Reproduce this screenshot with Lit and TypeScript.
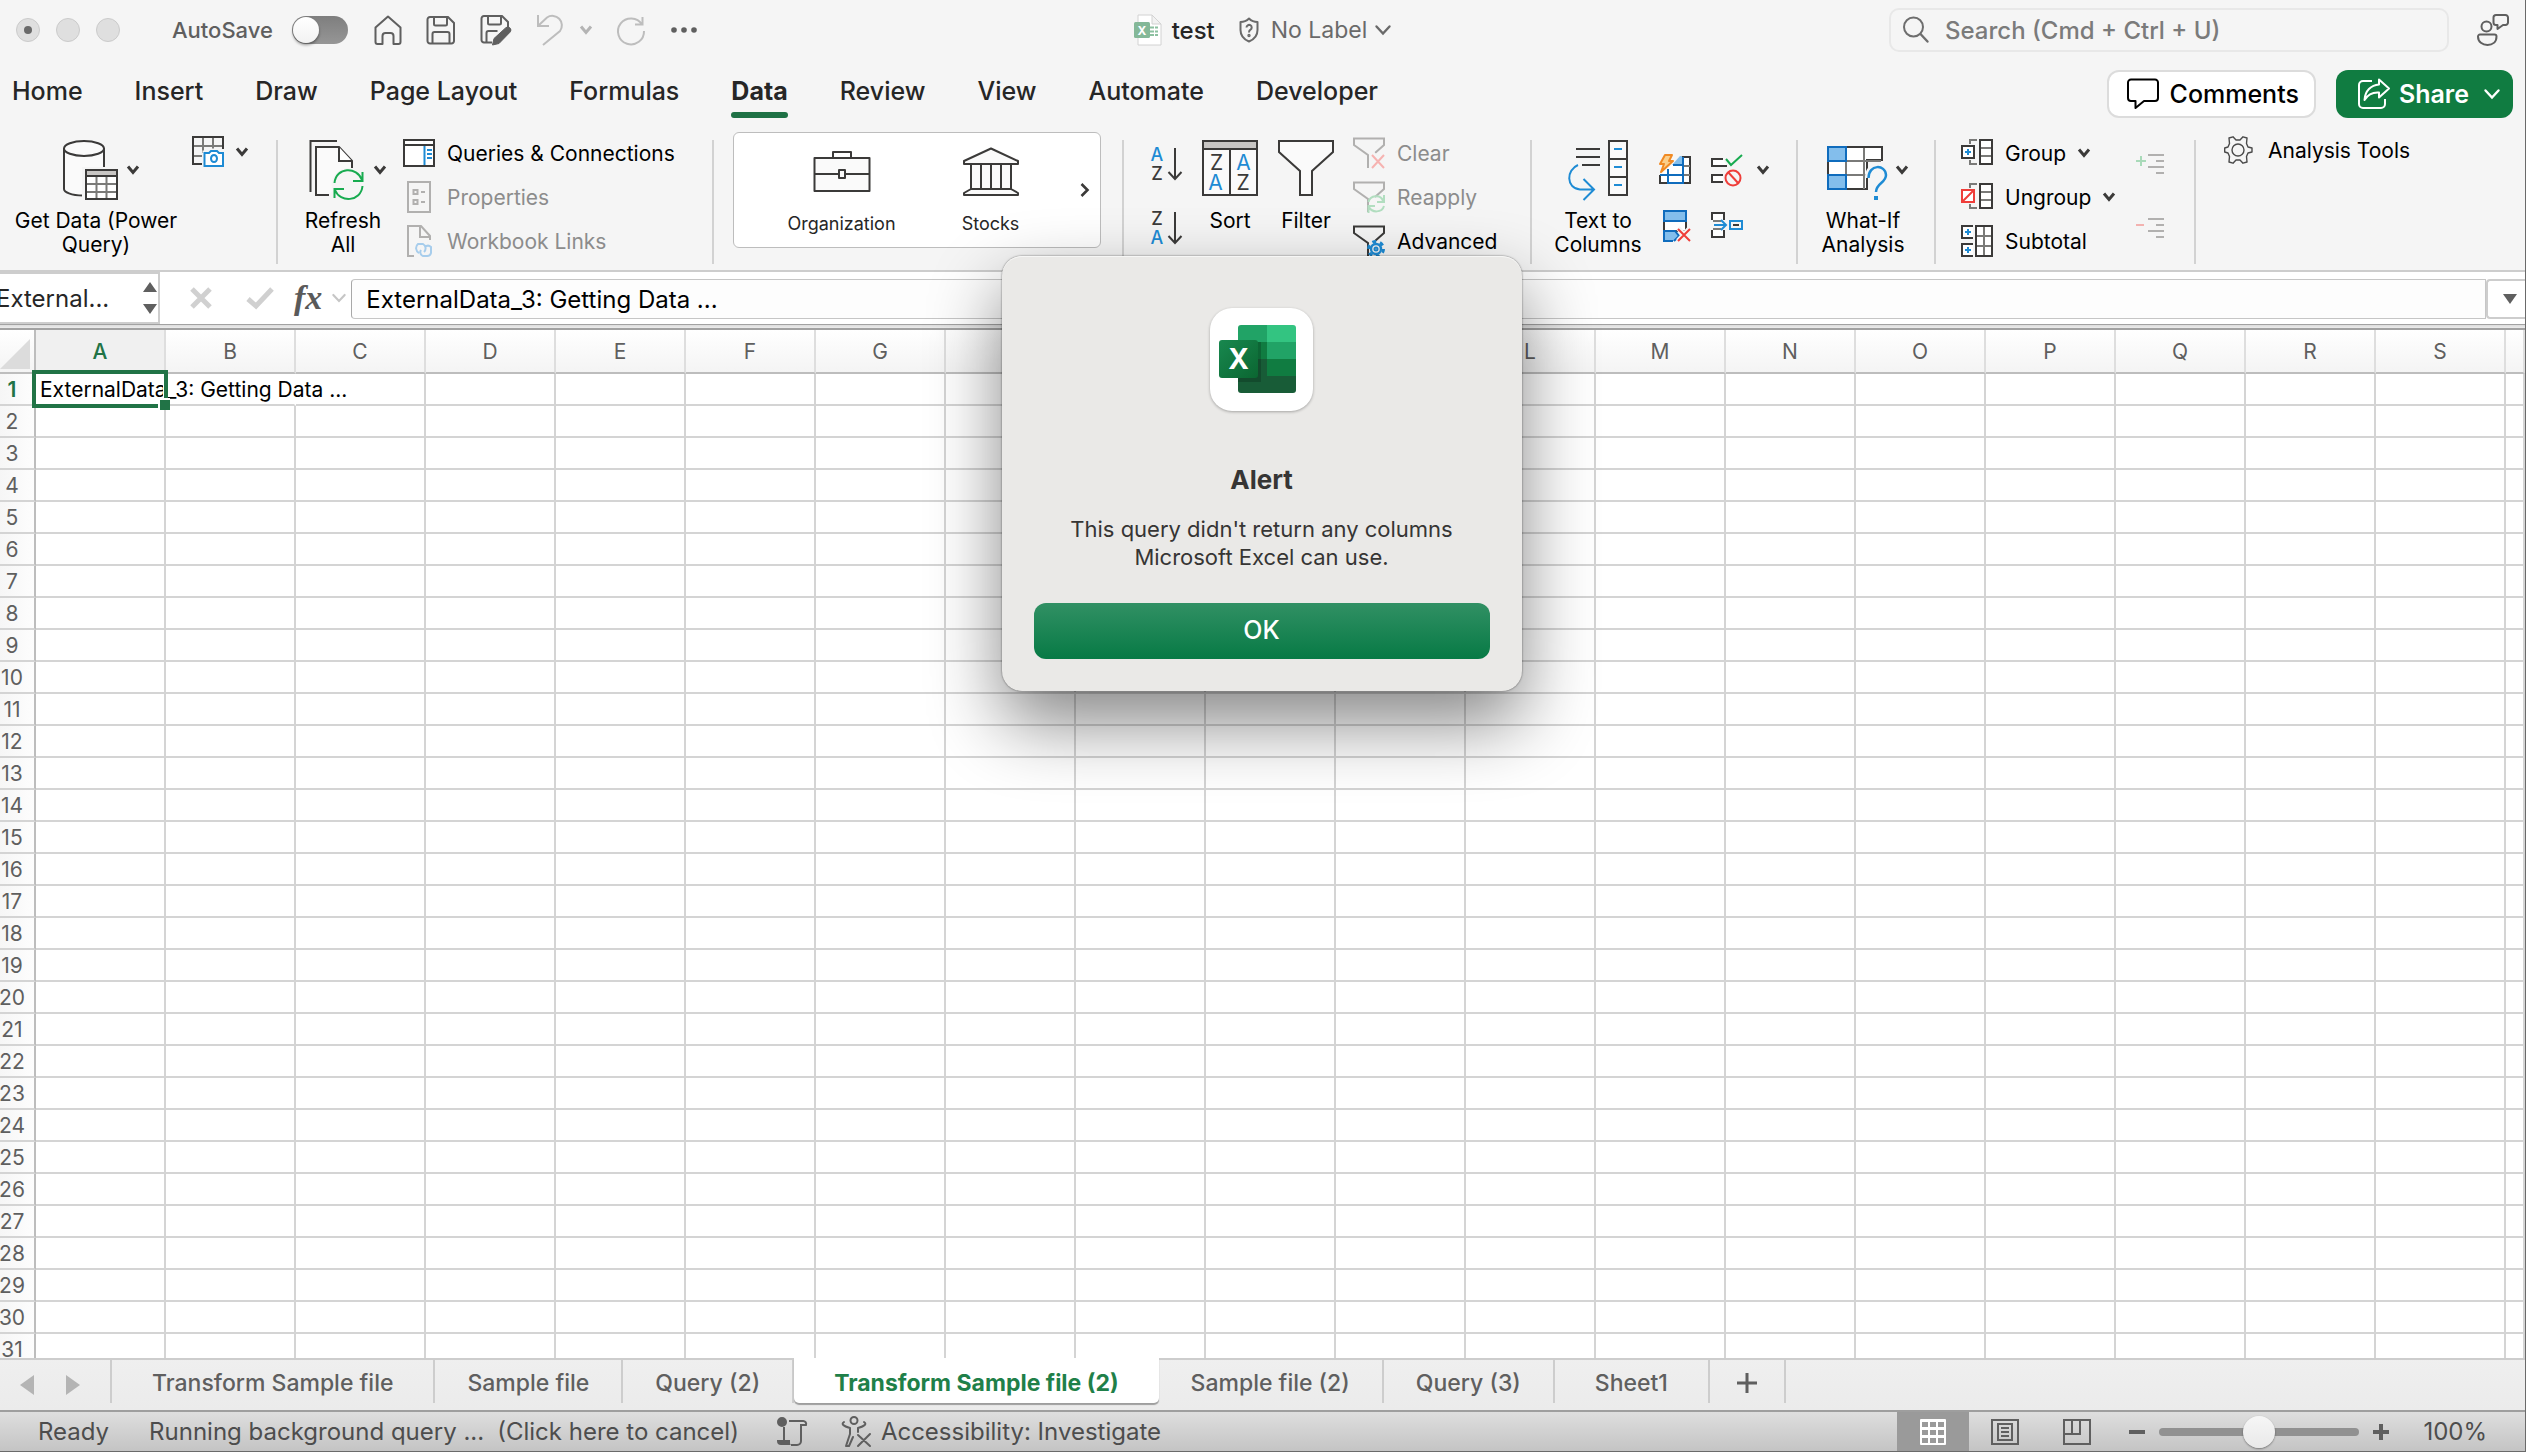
import { LitElement, html, css, svg, nothing } from "lit";
import type { SVGTemplateResult, TemplateResult } from "lit";
import { customElement } from "lit/decorators.js";
import { classMap } from "lit/directives/class-map.js";

const INK = "#3b3a39";
const BLUE = "#1e8bd4";
const DARK_BLUE = "#0f6cbd";
const SKY = "#83beec";
const GREEN = "#18ab50";
const RED = "#ef3e3a";
const GRAY = "#7a7a78";

/** Wraps drawing commands in an inline SVG whose units are pixels. */
const icon = (w: number, h: number, body: SVGTemplateResult) => html`<svg
  class="icon"
  width=${w}
  height=${h}
  viewBox="0 0 ${w} ${h}"
  fill="none"
  stroke-width="2"
  stroke=${INK}
  aria-hidden="true"
>
  ${body}
</svg>`;

const chevron = () => html`<svg class="icon chev" width="12" height="10" viewBox="0 0 12 10" fill="none" stroke="currentColor" stroke-width="3" aria-hidden="true">
  <path d="M1 1.5 6 7.5 11 1.5" />
</svg>`;

const thinChevron = (w: number) => html`<svg class="icon" width=${w} height="10" viewBox="0 0 16 10" fill="none" stroke="currentColor" stroke-width="2.4" stroke-linecap="round" aria-hidden="true">
  <path d="M1.5 1.5 8 8.5 14.5 1.5" />
</svg>`;

const funnel = (color: string) => svg`<path stroke=${color} d="M15 31V18L1 8V1.5H31V8L22 16" />`;

const icons = {
  home: icon(28, 30, svg`<path stroke="#5f5f5f" stroke-linejoin="round" d="M1.5 12.5 14 1.5 26.500 12.500V27a2 2 0 0 1-2 2H19.500V21a3 3 0 0 0-3-3h-5a3 3 0 0 0-3 3V29H3.500a2 2 0 0 1-2-2Z" />`),
  save: icon(30, 30, svg`<g stroke="#5f5f5f"><path d="M4 2H22l6 6V26a2.500 2.500 0 0 1-2.500 2.500H4A2.500 2.500 0 0 1 1.500 26V4.500A2.500 2.500 0 0 1 4 2Z" /><path d="M8 2V9a1.500 1.500 0 0 0 1.500 1.500h10A1.500 1.500 0 0 0 21 9V2M6.500 28V19A2 2 0 0 1 8.500 17h13a2 2 0 0 1 2 2v9" /></g>`),
  saveEdit: icon(32, 32, svg`<g stroke="#5f5f5f"><path d="M28 13V8L22 2H4A2.500 2.500 0 0 0 1.500 4.500V26A2.500 2.500 0 0 0 4 28.500H12" /><path d="M8 2V9a1.500 1.500 0 0 0 1.500 1.500h10A1.500 1.500 0 0 0 21 9V2M6.500 28V19A2 2 0 0 1 8.500 17h9" /><path fill="#5f5f5f" stroke-width="1" d="M12.500 31 14 24.500 25.500 14a3 3 0 0 1 4.500 4.200L19 29.500Z" /></g>`),
  undo: icon(28, 32, svg`<path stroke="#bdbdbd" d="M2 1V12H13M2.500 11.500 11 3.500A9.500 9.500 0 0 1 24 17L7 31" />`),
  redo: icon(30, 30, svg`<path stroke="#bdbdbd" d="M26.500 2V9.500H19M26 9.500A13 13 0 1 0 28 16" />`),
  dots: icon(28, 8, svg`<g fill="#5f5f5f" stroke="none"><circle cx="4" cy="4" r="2.800" /><circle cx="14" cy="4" r="2.800" /><circle cx="24" cy="4" r="2.800" /></g>`),
  file: icon(28, 32, svg`<g stroke="none"><path fill="#fff" stroke="#d2d2d2" stroke-width="1" d="M4 1H18l9 9V31H4Z" /><path fill="#f2f2f2" stroke="#d2d2d2" stroke-width="1" d="M18 1V10H27Z" /><path stroke="#8cc0a0" stroke-width="2" stroke-dasharray="4 1" d="M16 13.500h8M16 17.500h8M16 21h8" /><rect y="8" width="16" height="16" rx="1.500" fill="#84b898" /><text x="8" y="20.500" font-size="12" font-weight="700" fill="#fff" text-anchor="middle">X</text></g>`),
  shield: icon(20, 26, svg`<g stroke="#6a6a6a"><path stroke-linejoin="round" d="M10 1.500C7.500 4 4.500 5 1.500 5V13C1.500 19 5 22.500 10 24.500 15 22.500 18.500 19 18.500 13V5C15.500 5 12.500 4 10 1.500Z" /><path d="M7.500 10.500A2.600 2.600 0 1 1 11.500 12.700C10.300 13.400 10 14 10 15.500" /><circle cx="10" cy="18.500" r=".7" /></g>`),
  search: icon(26, 28, svg`<g stroke="#6e6e6e"><circle cx="10.500" cy="11" r="9.500" /><path stroke-width="2.400" stroke-linecap="round" d="M17.500 18 24.500 25.500" /></g>`),
  people: icon(32, 32, svg`<g stroke="#5f5f5f" stroke-linejoin="round"><circle cx="9.500" cy="12.500" r="5" /><path d="M3 20.500H17.500A2 2 0 0 1 19.500 22.500C19.500 28 15.500 31 10.500 31S1 28 1 22.500A2 2 0 0 1 3 20.500Z" /><path d="M19 1H28.500A2.500 2.500 0 0 1 31 3.500V8.500A2.500 2.500 0 0 1 28.500 11H26L20.500 15V11H19A2.500 2.500 0 0 1 16.500 8.500V3.500A2.500 2.500 0 0 1 19 1Z" /></g>`),
  comment: icon(32, 32, svg`<path stroke="#000" stroke-linejoin="round" d="M4 1.500H28A3 3 0 0 1 31 4.500V20A3 3 0 0 1 28 23H17L8.500 30V23H4A3 3 0 0 1 1 20V4.500A3 3 0 0 1 4 1.500Z" />`),
  share: icon(32, 32, svg`<g stroke="#fff" stroke-linejoin="round"><path d="M14 3H5A4 4 0 0 0 1 7V26A4 4 0 0 0 5 30H23A4 4 0 0 0 27 26V21" /><path d="M21 1.500 31 10.500 21 19.500V14.500C14 14 9.500 17 6.500 22 7 13 13 7 21 6.500Z" /></g>`),

  getData: icon(56, 60, svg`<path fill="#fafafa" d="M2 8V49C2 52 9 55.500 21 55.500V28H42V8" /><ellipse cx="22" cy="8.500" rx="20" ry="7.500" fill="#fafafa" /><rect x="20" y="27" width="40" height="40" fill="#f5f5f5" stroke="none" /><rect x="24" y="30" width="31" height="29" fill="#fff" /><path fill="#c8c6c4" stroke="none" d="M25 31H54V35H25Z" /><path d="M24 36H55" /><path stroke=${GRAY} d="M25 44H54M25 52H54M34.500 37V58M44.500 37V58" />`),
  camera: icon(32, 32, svg`<path stroke=${GRAY} d="M1 10H31M2 20H10M11 2V17M21 2V13" /><path d="M10 28H1V1H31V13" /><path stroke="#f5f5f5" stroke-width="5" d="M13 29V17H17L19 15H25L27 17H31V30" /><path stroke=${BLUE} fill="#fff" d="M12.500 30V17H17L19 15H25L27 17H31V30Z" /><ellipse cx="22" cy="22.500" rx="3" ry="3.500" stroke=${BLUE} />`),
  refreshAll: icon(56, 60, svg`<path d="M1.500 52V1H28" /><path fill="#fafafa" d="M20 55H7V7H30L43 21V28" /><path fill="#fff" d="M30 7V21H43" /><circle cx="39.500" cy="45" r="17" fill="#f5f5f5" stroke="none" /><path stroke=${GREEN} d="M25.500 43C27 27 48 26 53 40M53.500 32V41H44M53.500 46C52 62 31 63 26 50M25.500 58V49H35" />`),
  queries: icon(32, 28, svg`<path fill="#fff" d="M1 1H31V27H1Z" /><path d="M1 6H31" /><path stroke=${BLUE} d="M21.500 7V26M24 11H29M24 15H29M24 19H29" />`),
  properties: icon(32, 32, svg`<g stroke="#b1b0af"><path d="M5 1H27V31H5Z" /><path d="M10.500 9H14.500V13H10.500ZM10.500 19H14.500V23H10.500ZM18 11H22M18 21H22" /></g>`),
  links: icon(32, 32, svg`<g stroke="#b1b0af"><path d="M11 31H5V1H18L27 11V15M17 1V12H27" /></g><g stroke="#a7cdec"><path d="M16 28A5.500 5.500 0 0 1 15 19H20A5 5 0 0 1 21 27M22 22A4.500 4.500 0 0 1 28 22V28A4 4 0 0 1 24 31H20A4 4 0 0 1 18 25" /></g>`),
  briefcase: icon(58, 42, svg`<g stroke-linejoin="round"><path fill="#fafafa" d="M1.500 7H56.500V40H1.500Z" /><path d="M20 7V1H38V7M2 23H26M32 23H56" /><path d="M26 19H32V27H26Z" /></g>`),
  bank: icon(56, 50, svg`<path fill="#fafafa" stroke-linejoin="round" d="M1 14 28 1.500 55 14V17H1ZM8 17H48V42H8ZM1 48V46L8 42H48L55 46V48Z" /><path d="M18 17V42M28 17V42M38 17V42" />`),
  sortAsc: icon(32, 32, svg`<path d="M25 0V30M18.500 24 25 31 31.500 24" /><g stroke="none" font-size="18" font-weight="500" text-anchor="middle"><text x="7" y="13" fill=${BLUE}>A</text><text x="7" y="32" fill=${INK}>Z</text></g>`),
  sortDesc: icon(32, 32, svg`<path d="M25 0V30M18.500 24 25 31 31.500 24" /><g stroke="none" font-size="18" font-weight="500" text-anchor="middle"><text x="7" y="13" fill=${INK}>Z</text><text x="7" y="32" fill=${BLUE}>A</text></g>`),
  sort: icon(56, 58, svg`<path fill="#fafafa" d="M1 1H55V55H1Z" /><path fill="#c8c6c4" d="M1 1H55V9H1Z" /><path d="M28 9V55" /><g stroke="none" font-size="21" text-anchor="middle"><text x="14.500" y="30" fill=${INK}>Z</text><text x="13.500" y="50" fill=${BLUE}>A</text><text x="41.500" y="30" fill=${BLUE}>A</text><text x="41" y="50" fill=${INK}>Z</text></g>`),
  filter: icon(56, 58, svg`<path fill="#fafafa" d="M1 1H55V12L34 31V55H22V31L1 12Z" />`),
  clear: icon(32, 32, svg`${funnel("#b1b0af")}<path stroke="#f5f5f5" stroke-width="6" d="M19 17 31 31M31 17 19 31" /><path stroke="#f6b3b1" d="M19 18 31 31M31 18 19 31" />`),
  reapply: icon(32, 32, svg`${funnel("#b1b0af")}<path stroke="#b2dec0" d="M15.500 21C17 14 28 13 30 20M31 14V21H24M31 25C29 32 19 32 16 26M15.500 32V25H22" />`),
  advanced: icon(32, 32, svg`${funnel(INK)}<g stroke=${BLUE}><circle cx="23" cy="24" r="7.500" stroke-dasharray="3.900 3.954" stroke-width="3" /><circle cx="23" cy="24" r="5" stroke-width="2.400" /><circle cx="23" cy="24" r="1.500" stroke-width="2" /></g>`),
  textCols: icon(60, 60, svg`<path d="M8 9H32M8 17H32M14 25H32" /><path fill="#fafafa" d="M41 1H59V55H41ZM41 19H59M41 37H59" /><path stroke=${BLUE} d="M46 9H54M46 27H54M46 45H54M10 25C-2 30-2 48 12 49.500H25M15.500 39 26 49.500 15.500 60" />`),
  flashFill: icon(32, 32, svg`<path fill="#fff" d="M1 21V29H31V3H22" /><path stroke=${GRAY} d="M24 12H31M24 21H31" /><path stroke=${DARK_BLUE} d="M9 29V20M1 21H9" /><path fill="#fff" stroke=${DARK_BLUE} d="M9 15V29H24V3M9 21H24" /><path fill=${SKY} stroke="none" d="M13 11 21 2H23V11Z" /><path stroke=${DARK_BLUE} d="M14 11H24" /><path fill="#fbcf8b" stroke="#f08a24" stroke-linejoin="round" d="M6 1H13L10 7H14L2 18 5 10H1Z" />`),
  validation: icon(32, 32, svg`<path fill="#fff" d="M12 5H1V12H16M12 21H1V28H12" /><path stroke=${GREEN} d="M15 5 20 11 31 1" /><circle cx="22" cy="24" r="7.500" stroke=${RED} /><path stroke=${RED} d="M17 18 27 29" />`),
  dupes: icon(32, 32, svg`<path fill="#fff" d="M5 11V21H27V11" /><path fill=${SKY} stroke=${DARK_BLUE} d="M5 1H27V11H5ZM14 31H5V21H16L20 26 15 31" /><path stroke="#f5f5f5" stroke-width="5" d="M19 18 31 31M31 18 19 31" /><path stroke=${RED} d="M19 19 31 31M31 19 19 31" />`),
  consolidate: icon(32, 28, svg`<path fill="#fff" d="M1 8V1H13V8M1 18V25H13V18" /><path stroke=${GRAY} d="M2 9H10M2 17H10" /><path stroke=${BLUE} d="M3 13H14M10 8 15 13 10 18M19 9H31V17H19Z" /><path d="M22 13H28" />`),
  whatIf: icon(60, 60, svg`<path fill="#fff" d="M1 7H55V20H40V49H1Z" /><path stroke=${GRAY} d="M19 8V49M37 8V49M1 21H54M1 35H40" /><path fill=${SKY} stroke=${DARK_BLUE} d="M1 7H19V21H1ZM1 35H19V49H1Z" /><path stroke="#f5f5f5" stroke-width="8" d="M42 38C42 24 57 24 58 34 58 42 49 42 49 53" /><path fill=${BLUE} stroke="none" d="M47 56H51V60H47Z" /><path stroke=${BLUE} stroke-width="2.500" d="M41.500 38C41.500 24 58.500 24 59 35 59 43 49 43 49 52" />`),
  group: icon(32, 28, svg`<path fill="#fff" d="M19 1H31V25H19Z" /><path stroke=${GRAY} d="M20 9H30M20 17H30M16 1H9V5M9 21V25H16" /><path fill="#fff" d="M1 7H13V19H1Z" /><path stroke=${BLUE} d="M4 13H10M7 10V16" />`),
  ungroup: icon(32, 28, svg`<path fill="#fff" d="M19 1H31V25H19Z" /><path stroke=${GRAY} d="M20 9H30M20 17H30M16 1H9V5M9 21V25H16" /><path fill="#fff" stroke=${RED} d="M1 7H13V19H1ZM2 18 12 8" />`),
  subtotal: icon(32, 32, svg`<path fill="#fff" d="M15 1H31V31H15ZM12 1H1V13H12M12 19H1V31H12" /><path stroke=${GRAY} d="M16 11H30M16 21H30M23 2V30" /><path stroke=${BLUE} d="M4 7H10M7 4V10M4 25H10M7 22V28" />`),
  showDetail: icon(28, 22, svg`<path stroke="#b1b0af" d="M12 1H28M20 7H28M12 13H28M20 19H28" /><path stroke="#a9dab9" d="M0 7H10M5 2V12" />`),
  hideDetail: icon(28, 22, svg`<path stroke="#b1b0af" d="M12 1H28M20 7H28M12 13H28M20 19H28" /><path stroke="#f3b2b0" d="M0 7H8" />`),
  gear: icon(32, 28, svg`<g stroke="#4a4a4a" stroke-width="1.400" stroke-linejoin="round"><path d="M5 2 9 .8 12 4H16L19 .8 23 2 22.500 7.500 24 11 28 12V16L24 17 22.500 20.500 23 26 19 27.200 16 24H12L9 27.200 5 26 5.500 20.500 4 17 0.700 16V12L4 11 5.500 7.500Z" /><circle cx="14" cy="14" r="6" /></g>`),

  excel: icon(78, 70, svg`<defs><linearGradient id="tile" x1="0" y1="0" x2="1" y2="1"><stop offset="0" stop-color="#18884f" /><stop offset="1" stop-color="#0b6631" /></linearGradient><clipPath id="sheet"><rect x="19" y="0" width="58" height="68" rx="3" /></clipPath></defs><g stroke="none"><g clip-path="url(#sheet)"><path fill="#21a366" d="M19 0H48V17H19Z" /><path fill="#33c481" d="M48 0H77V17H48Z" /><path fill="#107c41" d="M19 17H48V34H19Z" /><path fill="#21a366" d="M48 17H77V34H48Z" /><path fill="#185c37" d="M19 34H77V68H19Z" /><path fill="#107c41" d="M48 34H77V51H48Z" /><path fill="#000" opacity=".18" d="M19 17H42V57H19Z" /></g><rect y="15" width="39" height="38" rx="3" fill="url(#tile)" /><text x="19.500" y="44" font-size="28" font-weight="700" fill="#fff" text-anchor="middle">X</text></g>`),

  macro: icon(30, 30, svg`<g stroke="#5f5f5f"><path fill="#5f5f5f" stroke="none" d="M5 0A5 5 0 1 1 5 10 5 5 0 0 1 5 0ZM0 23H13V26C13 29 17 29 17 28H4A4 4 0 0 1 0 24Z" /><path d="M7 10V23M12 4H26A3 3 0 0 1 29 8H24V24A4 4 0 0 1 20 28H14" /></g>`),
  access: icon(32, 32, svg`<g stroke="#5f5f5f" stroke-linecap="round" stroke-linejoin="round"><circle cx="13" cy="4.500" r="3.500" /><path d="M3 6C0 8 2 10 9 12V18L5 30H8L12 21M23 6C26 8 24 10 17 12V16M17 19 29 30M29 18 17 30" /></g>`),
  viewNormal: icon(26, 26, svg`<rect width="26" height="26" rx="1" fill="#fff" stroke="none" /><path fill="#9a9a9a" stroke="none" d="M2 3H8V8H2ZM10 3H16V8H10ZM18 3H24V8H18ZM2 11H8V16H2ZM10 11H16V16H10ZM18 11H24V16H18ZM2 19H8V24H2ZM10 19H16V24H10ZM18 19H24V24H18Z" />`),
  viewPage: icon(28, 26, svg`<g stroke="#5f5f5f"><path d="M1 1H27V25H1ZM7 5H21V21H7ZM10 9H18M10 13H18M10 17H18" /></g>`),
  viewBreak: icon(28, 26, svg`<g stroke="#5f5f5f"><path d="M1 1H27V25H1ZM1 15H17V1M9 1V15" /></g>`),
};

interface Command {
  label: string;
  icon: TemplateResult;
  disabled?: boolean;
  menu?: boolean;
}

const TABS = ["Home", "Insert", "Draw", "Page Layout", "Formulas", "Data", "Review", "View", "Automate", "Developer"];
const COLUMNS = "ABCDEFGHIJKLMNOPQRS".split("");
const ROWS = Array.from({ length: 31 }, (_, i) => i + 1);
const SHEETS = [
  { name: "Transform Sample file", wide: true },
  { name: "Sample file" },
  { name: "Query (2)" },
  { name: "Transform Sample file (2)", wide: true, active: true },
  { name: "Sample file (2)" },
  { name: "Query (3)" },
  { name: "Sheet1", wide: true },
];

const base = css`
  :host,
  * {
    box-sizing: border-box;
  }
  button,
  input,
  select {
    font: inherit;
    color: inherit;
    background: none;
    border: 0;
    margin: 0;
    padding: 0;
  }
  button {
    white-space: nowrap;
  }
  .icon {
    display: block;
    flex: none;
    overflow: visible;
  }
`;

@customElement("title-bar")
export class TitleBar extends LitElement {
  static styles = [
    base,
    css`
      :host {
        display: grid;
        grid-template-columns: 1fr auto 1fr;
        align-items: center;
        flex: none;
        height: 60px;
        padding: 0 16px;
        font-size: 22px;
        color: #5f5f5f;
      }
      .left,
      .center,
      .right {
        display: flex;
        align-items: center;
      }
      .right {
        justify-content: flex-end;
        gap: 28px;
      }
      .lights {
        display: flex;
        gap: 16px;
        margin-right: 52px;
      }
      .light {
        width: 24px;
        height: 24px;
        border-radius: 50%;
        background: #dfdfdf;
        border: 1px solid #cbcbcb;
        display: grid;
        place-items: center;
      }
      .light.edited::after {
        content: "";
        width: 8px;
        height: 8px;
        border-radius: 50%;
        background: #6a6a6a;
      }
      .autosave {
        display: flex;
        align-items: center;
        font-weight: 500;
        gap: 19px;
      }
      .switch {
        appearance: none;
        width: 56px;
        height: 28px;
        border-radius: 14px;
        background: linear-gradient(#7e7e7e, #969696);
        display: flex;
        align-items: center;
      }
      .switch::before {
        content: "";
        width: 26px;
        height: 26px;
        margin-left: 1px;
        border-radius: 50%;
        background: linear-gradient(#fff, #f2f2f2);
        box-shadow: 0 2px 3px rgba(0, 0, 0, 0.4);
      }
      .quick {
        display: flex;
        align-items: center;
        gap: 24px;
        margin-left: 26px;
      }
      .undo {
        display: flex;
        align-items: center;
        gap: 16px;
        color: #b4b4b4;
      }
      .center {
        gap: 10px;
      }
      .doc {
        font-size: 24px;
        font-weight: 500;
        color: #262626;
      }
      .label {
        display: flex;
        align-items: center;
        gap: 12px;
        margin-left: 14px;
        font-size: 23px;
        color: #6a6a6a;
      }
      .label span {
        margin-right: -4px;
      }
      .search {
        display: flex;
        align-items: center;
        gap: 16px;
        flex: 0 1 560px;
        height: 44px;
        padding: 0 12px;
        border: 2px solid #e8e8e8;
        border-radius: 10px;
      }
      .search input {
        flex: 1;
        min-width: 0;
        font-size: 24px;
        font-weight: 500;
        outline: 0;
      }
      .search input::placeholder {
        color: #7b7b7b;
        opacity: 1;
      }
    `,
  ];

  render() {
    return html`
      <div class="left">
        <div class="lights"><span class="light edited"></span><span class="light"></span><span class="light"></span></div>
        <label class="autosave">AutoSave<input class="switch" type="checkbox" role="switch" /></label>
        <div class="quick">
          <button aria-label="Home">${icons.home}</button>
          <button aria-label="Save">${icons.save}</button>
          <button aria-label="Save As">${icons.saveEdit}</button>
          <button class="undo" aria-label="Undo">${icons.undo}${chevron()}</button>
          <button aria-label="Redo">${icons.redo}</button>
          <button aria-label="More">${icons.dots}</button>
        </div>
      </div>
      <div class="center">
        ${icons.file}<span class="doc">test</span>
        <button class="label">${icons.shield}<span>No Label</span>${thinChevron(16)}</button>
      </div>
      <div class="right">
        <label class="search">${icons.search}<input type="search" aria-label="Search" placeholder="Search (Cmd + Ctrl + U)" /></label>
        <button aria-label="Presence">${icons.people}</button>
      </div>
    `;
  }
}

@customElement("ribbon-tabs")
export class RibbonTabs extends LitElement {
  static styles = [
    base,
    css`
      :host {
        display: flex;
        justify-content: space-between;
        flex: none;
        height: 64px;
        padding: 10px 12px 6px 12px;
        font-size: 25px;
        font-weight: 500;
      }
      .tabs,
      .actions {
        display: flex;
      }
      .tabs {
        gap: 52px;
        color: #262626;
      }
      .tab {
        height: 48px;
        line-height: 42px;
        font-weight: 500;
        display: flex;
        flex-direction: column;
      }
      .tab.active {
        font-weight: 700;
      }
      .tab.active::after {
        content: "";
        height: 6px;
        border-radius: 3px;
        background: #1e7145;
      }
      .actions {
        gap: 20px;
      }
      .action {
        display: flex;
        align-items: center;
        gap: 11px;
        height: 48px;
        border-radius: 12px;
      }
      .comments {
        padding: 0 15px 0 18px;
        border: 2px solid #dcdcdc;
        background: #fff;
        color: #000;
      }
      .share {
        padding: 0 13px 0 22px;
        gap: 9px;
        background: #107c41;
        color: #fff;
        font-weight: 600;
      }
      .share span {
        margin-right: 6px;
      }
    `,
  ];

  render() {
    return html`
      <nav class="tabs" role="tablist">
        ${TABS.map((t) => html`<button role="tab" class=${classMap({ tab: true, active: t === "Data" })}>${t}</button>`)}
      </nav>
      <div class="actions">
        <button class="action comments">${icons.comment}Comments</button>
        <button class="action share">${icons.share}<span>Share</span>${thinChevron(16)}</button>
      </div>
    `;
  }
}

@customElement("data-ribbon")
export class DataRibbon extends LitElement {
  static styles = [
    base,
    css`
      :host {
        display: flex;
        flex: none;
        height: 146px;
        padding: 7px 0 6px;
        font-size: 21px;
        color: #000;
      }
      .chev {
        color: #3b3a39;
      }
      .group {
        display: flex;
        align-items: flex-start;
        flex: none;
      }
      .sep {
        flex: none;
        width: 2px;
        margin-top: 9px;
        background: #d2d2d2;
      }
      .big {
        display: flex;
        flex-direction: column;
        align-items: center;
        gap: 9px;
        padding-top: 9px;
        line-height: 24px;
      }
      .big .art {
        display: flex;
        align-items: center;
        gap: 9px;
        height: 60px;
      }
      .big .art.menu {
        padding-left: 8px;
      }
      .big .art .icon:first-child {
        align-self: flex-start;
      }
      .list {
        display: flex;
        flex-direction: column;
      }
      .row {
        display: flex;
        align-items: center;
        gap: 12px;
        height: 44px;
      }
      .row:disabled {
        color: #8c8c8c;
      }
      .stack {
        display: flex;
        flex-direction: column;
        gap: 32px;
        padding-top: 17px;
      }
      .tools {
        display: grid;
        grid-template-columns: 32px 32px 12px;
        column-gap: 20px;
        row-gap: 24px;
        align-items: center;
        padding-top: 23px;
      }
      .tools .chev {
        margin-left: -6px;
      }
      .import {
        width: 276px;
      }
      .import .big {
        width: 192px;
      }
      .snap {
        display: flex;
        align-items: center;
        gap: 12px;
        padding-top: 5px;
      }
      .connections {
        width: 434px;
        padding-left: 16px;
      }
      .connections .big {
        width: 98px;
        margin-right: 11px;
      }
      .types {
        width: 408px;
        padding-left: 19px;
      }
      .gallery {
        display: flex;
        width: 368px;
        height: 116px;
        margin-top: 1px;
        padding-left: 33px;
        border: 1px solid #bdbdbd;
        border-radius: 6px;
        background: #fff;
        font-size: 18px;
        color: #262626;
      }
      .type {
        width: 149px;
        display: grid;
        grid-template-rows: 78px auto;
        row-gap: 2px;
        justify-items: center;
        align-items: center;
        align-content: start;
      }
      .more {
        margin-left: 15px;
      }
      .sorting {
        width: 406px;
        padding-left: 26px;
      }
      .sorting .big {
        width: 76px;
      }
      .sorting .stack {
        margin-right: 10px;
      }
      .sorting .list {
        margin-left: 9px;
      }
      .datatools {
        width: 264px;
        padding-left: 15px;
      }
      .datatools .big {
        width: 102px;
        margin-right: 10px;
      }
      .forecast {
        width: 136px;
        padding-left: 3px;
      }
      .forecast .big {
        width: 124px;
      }
      .outline {
        width: 258px;
        padding-left: 25px;
      }
      .outline .list {
        width: 175px;
      }
      .outline .stack {
        gap: 42px;
        padding-top: 23px;
      }
      .analysis {
        padding-left: 28px;
      }
      .analysis .row {
        height: 38px;
      }
    `,
  ];

  private big(lines: string[], art: TemplateResult, menu = false) {
    return html`<button class="big">
      <span class=${classMap({ art: true, menu })}>${art}${menu ? chevron() : nothing}</span>
      <span>${lines.map((l, i) => (i ? html`<br />${l}` : l))}</span>
    </button>`;
  }

  private list(commands: Command[]) {
    return html`<div class="list">
      ${commands.map((c) => html`<button class="row" ?disabled=${c.disabled}>${c.icon}<span>${c.label}</span>${c.menu ? chevron() : nothing}</button>`)}
    </div>`;
  }

  render() {
    return html`
      <div class="group import">
        ${this.big(["Get Data (Power", "Query)"], icons.getData, true)}
        <button class="snap" aria-label="Data from Picture">${icons.camera}${chevron()}</button>
      </div>
      <i class="sep"></i>
      <div class="group connections">
        ${this.big(["Refresh", "All"], icons.refreshAll, true)}
        ${this.list([
          { label: "Queries & Connections", icon: icons.queries },
          { label: "Properties", icon: icons.properties, disabled: true },
          { label: "Workbook Links", icon: icons.links, disabled: true },
        ])}
      </div>
      <i class="sep"></i>
      <div class="group types">
        <div class="gallery">
          <button class="type">${icons.briefcase}<span>Organization</span></button>
          <button class="type">${icons.bank}<span>Stocks</span></button>
          <button class="more" aria-label="More data types">${icon(10, 14, svg`<path stroke-width="2.600" d="M1.500 1 7.500 7 1.500 13" />`)}</button>
        </div>
      </div>
      <i class="sep"></i>
      <div class="group sorting">
        <div class="stack">
          <button aria-label="Sort ascending">${icons.sortAsc}</button>
          <button aria-label="Sort descending">${icons.sortDesc}</button>
        </div>
        ${this.big(["Sort"], icons.sort)} ${this.big(["Filter"], icons.filter)}
        ${this.list([
          { label: "Clear", icon: icons.clear, disabled: true },
          { label: "Reapply", icon: icons.reapply, disabled: true },
          { label: "Advanced", icon: icons.advanced },
        ])}
      </div>
      <i class="sep"></i>
      <div class="group datatools">
        ${this.big(["Text to", "Columns"], icons.textCols)}
        <div class="tools">
          <button aria-label="Flash Fill">${icons.flashFill}</button>
          <button aria-label="Data Validation">${icons.validation}</button>
          ${chevron()}
          <button aria-label="Remove Duplicates">${icons.dupes}</button>
          <button aria-label="Consolidate">${icons.consolidate}</button>
        </div>
      </div>
      <i class="sep"></i>
      <div class="group forecast">${this.big(["What-If", "Analysis"], icons.whatIf, true)}</div>
      <i class="sep"></i>
      <div class="group outline">
        ${this.list([
          { label: "Group", icon: icons.group, menu: true },
          { label: "Ungroup", icon: icons.ungroup, menu: true },
          { label: "Subtotal", icon: icons.subtotal },
        ])}
        <div class="stack">
          <button aria-label="Show Detail" disabled>${icons.showDetail}</button>
          <button aria-label="Hide Detail" disabled>${icons.hideDetail}</button>
        </div>
      </div>
      <i class="sep"></i>
      <div class="group analysis">${this.list([{ label: "Analysis Tools", icon: icons.gear }])}</div>
    `;
  }
}

@customElement("formula-bar")
export class FormulaBar extends LitElement {
  static styles = [
    base,
    css`
      :host {
        display: flex;
        flex: none;
        height: 60px;
        border-top: 2px solid #cdcdcd;
        border-bottom: 2px solid #a2a2a2;
        background: linear-gradient(#a2a2a2, #a2a2a2) 0 52px / 100% 1px no-repeat, linear-gradient(#dcdcdc, #ececec) 0 53px / 100% 3px no-repeat, #fff;
      }
      .name {
        display: flex;
        align-items: center;
        justify-content: space-between;
        width: 160px;
        height: 52px;
        padding-right: 1px;
        border: solid #cdcdcd;
        border-width: 2px 2px 2px 0;
        color: #262626;
      }
      .name input {
        width: 130px;
        font-size: 24px;
        text-indent: -4px;
      }
      .controls {
        display: flex;
        align-items: center;
        height: 52px;
        padding-left: 30px;
      }
      .tick {
        margin-left: 34px;
      }
      .fx {
        margin-left: 20px;
        font: italic 700 34px/1 "Liberation Serif", serif;
        color: #5a5a5a;
      }
      .drop {
        margin-left: 10px;
        color: #c6c6c6;
      }
      .formula {
        flex: 1;
        min-width: 0;
        height: 40px;
        margin: 7px 0 0 5px;
        padding-left: 14px;
        border: 1px solid #c6c6c6;
        border-left-color: #a8a8a8;
        border-radius: 4px 0 0 4px;
        background: #fdfdfd;
        font-size: 24px;
        color: #000;
      }
      .expand {
        width: 39px;
        height: 40px;
        margin-top: 7px;
        padding-left: 6px;
        border: 2px solid #cdcdcd;
        border-width: 2px 0 2px 2px;
        border-radius: 4px 0 0 4px;
        display: grid;
        place-items: center;
      }
    `,
  ];

  render() {
    return html`
      <div class="name">
        <input aria-label="Name box" .value=${"External..."} />
        ${icon(14, 32, svg`<path fill="#5f5f5f" stroke="none" d="M7 0 14 10H0ZM7 32 14 22H0Z" />`)}
      </div>
      <div class="controls">
        <button aria-label="Cancel">${icon(22, 22, svg`<path stroke="#d0d0d0" stroke-width="5" d="M2 2 20 20M20 2 2 20" />`)}</button>
        <button class="tick" aria-label="Enter">${icon(28, 22, svg`<path stroke="#d0d0d0" stroke-width="5" d="M2 12 10 19 26 2" />`)}</button>
        <button class="fx" aria-label="Insert function">fx</button>
        <button class="drop" aria-label="Functions">${thinChevron(14)}</button>
      </div>
      <input class="formula" aria-label="Formula" .value=${"ExternalData_3: Getting Data ..."} />
      <button class="expand" aria-label="Expand formula bar">${icon(14, 10, svg`<path fill="#5f5f5f" stroke="none" d="M0 0H14L7 10Z" />`)}</button>
    `;
  }
}

@customElement("sheet-grid")
export class SheetGrid extends LitElement {
  static styles = [
    base,
    css`
      :host {
        display: block;
        flex: 1;
        min-height: 0;
        overflow: hidden;
        background: #fff;
      }
      .grid {
        width: 100%;
        table-layout: fixed;
        border-collapse: separate;
        border-spacing: 0;
        font-size: 21px;
        line-height: 26px;
      }
      .nums {
        width: 36px;
      }
      .col {
        width: 130px;
      }
      th,
      td {
        padding: 2px 0 0;
        border: solid #d4d4d4;
        border-width: 0 2px 2px 0;
      }
      th {
        font-weight: 400;
        color: #5f5f5f;
      }
      thead th {
        height: 44px;
        border-bottom-color: #bdbdbd;
        border-right-color: #dedede;
        background: linear-gradient(#fff, #f4f4f4);
      }
      thead th.corner,
      tbody th {
        border-right-color: #bdbdbd;
      }
      thead th.on {
        background: #f0f0f0;
        color: #217346;
        font-weight: 500;
      }
      tbody th {
        height: 32px;
        padding-right: 10px;
        background: linear-gradient(90deg, #f6f6f6, #fdfdfd);
        text-align: center;
      }
      tbody th.on {
        color: #217346;
        font-weight: 600;
      }
      .digits {
        display: flex;
        justify-content: center;
      }
      .corner svg {
        margin-top: 4px;
      }
      .open {
        border-right-color: transparent;
      }
      .cell {
        position: relative;
        padding-left: 4px;
        color: #000;
        white-space: nowrap;
      }
      .frame {
        position: absolute;
        inset: -4px;
        border: 4px solid #217346;
        box-shadow: inset -1px 0 0 #fff;
      }
      .handle {
        position: absolute;
        right: -6px;
        bottom: -6px;
        width: 12px;
        height: 12px;
        border: solid #fff;
        border-width: 2px 0 0 2px;
        background: #217346;
      }
    `,
  ];

  private active() {
    return html`<td class="cell">ExternalData_3: Getting Data ...<span class="frame"><span class="handle"></span></span></td>`;
  }

  render() {
    return html`<table class="grid">
      <colgroup>
        <col class="nums" />
        ${COLUMNS.map(() => html`<col class="col" />`)}
        <col />
      </colgroup>
      <thead>
        <tr>
          <th class="corner" aria-label="Select all">${icon(30, 30, svg`<path fill="#dcdcdc" stroke="none" d="M30 0V30H0Z" />`)}</th>
          ${COLUMNS.map((c, i) => html`<th scope="col" class=${i ? "" : "on"}>${c}</th>`)}
          <th></th>
        </tr>
      </thead>
      <tbody>
        ${ROWS.map(
          (r) => html`<tr>
            <th scope="row" class=${r === 1 ? "on" : ""}><span class="digits">${r}</span></th>
            ${COLUMNS.map((_, i) => (r === 1 && i === 0 ? this.active() : html`<td class=${r === 1 && i === 1 ? "open" : ""}></td>`))}
            <td></td>
          </tr>`,
        )}
      </tbody>
    </table>`;
  }
}

@customElement("sheet-tabs")
export class SheetTabs extends LitElement {
  static styles = [
    base,
    css`
      :host {
        display: flex;
        flex: none;
        height: 54px;
        border-bottom: 2px solid #9e9e9e;
        background: linear-gradient(#cdcdcd, #cdcdcd) 0 0 / 100% 2px no-repeat, linear-gradient(#efefef, #ebebeb);
        font-size: 23px;
        font-weight: 500;
        color: #5f5f5f;
      }
      .arrows {
        display: flex;
        align-items: center;
        gap: 32px;
        width: 112px;
        height: 45px;
        padding: 8px 0 0 20px;
        border-right: 2px solid #cdcdcd;
      }
      .sheet {
        height: 45px;
        padding: 4px 32px 0;
        border-right: 2px solid #cdcdcd;
      }
      .sheet.wide {
        padding-left: 40px;
        padding-right: 40px;
      }
      .sheet.active {
        background: #fff;
        color: #1f8049;
        font-weight: 700;
        border-radius: 0 0 5px 5px;
        border-right: 0;
        box-shadow: 0 2px 1px #9e9e9e;
      }
      .add {
        width: 76px;
        height: 45px;
        padding-top: 4px;
        border-right: 2px solid #cdcdcd;
        display: grid;
        place-items: center;
      }
    `,
  ];

  render() {
    return html`
      <div class="arrows">
        <button aria-label="Previous sheets" disabled>${icon(14, 20, svg`<path fill="#b4b4b4" stroke="none" d="M14 0V20L0 10Z" />`)}</button>
        <button aria-label="Next sheets" disabled>${icon(14, 20, svg`<path fill="#b4b4b4" stroke="none" d="M0 0V20L14 10Z" />`)}</button>
      </div>
      ${SHEETS.map((s) => html`<button class=${classMap({ sheet: true, wide: !!s.wide, active: !!s.active })}>${s.name}</button>`)}
      <button class="add" aria-label="New sheet">${icon(20, 20, svg`<path stroke="#5f5f5f" stroke-width="3" d="M0 10H20M10 0V20" />`)}</button>
    `;
  }
}

@customElement("status-bar")
export class StatusBar extends LitElement {
  static styles = [
    base,
    css`
      :host {
        display: flex;
        align-items: center;
        flex: none;
        height: 40px;
        padding: 0 38px;
        border-bottom: 1px solid #6a6a6a;
        background: linear-gradient(#dedede, #c4c4c4);
        font-size: 24px;
        color: #4d4d4d;
        white-space: nowrap;
      }
      .query {
        margin-left: 40px;
      }
      .cancel {
        margin-left: 13px;
      }
      .macro {
        margin-left: 38px;
      }
      .check {
        display: flex;
        align-items: center;
        gap: 8px;
        margin-left: 34px;
      }
      .views {
        display: flex;
        align-items: center;
        height: 100%;
        margin-left: auto;
      }
      .view {
        display: grid;
        place-items: center;
        width: 72px;
        height: 100%;
      }
      .view.on {
        background: #9a9a9a;
      }
      .zoom {
        display: flex;
        align-items: center;
        gap: 14px;
        margin: 0 34px 0 16px;
      }
      .slider {
        appearance: none;
        width: 200px;
        height: 8px;
        border-radius: 4px;
        background: #919191;
      }
      .slider::-webkit-slider-thumb {
        appearance: none;
        width: 32px;
        height: 32px;
        border-radius: 50%;
        background: linear-gradient(#f6f6f6, #e9e9e9);
        box-shadow: 0 1px 2px rgba(0, 0, 0, 0.4);
      }
    `,
  ];

  render() {
    return html`
      <span>Ready</span>
      <span class="query">Running background query ...</span>
      <button class="cancel">(Click here to cancel)</button>
      <button class="macro" aria-label="Record macro">${icons.macro}</button>
      <button class="check">${icons.access}<span>Accessibility: Investigate</span></button>
      <div class="views">
        <button class="view on" aria-label="Normal view">${icons.viewNormal}</button>
        <button class="view" aria-label="Page layout view">${icons.viewPage}</button>
        <button class="view" aria-label="Page break preview">${icons.viewBreak}</button>
      </div>
      <div class="zoom">
        <button aria-label="Zoom out">${icon(16, 20, svg`<path stroke="#5f5f5f" stroke-width="4" d="M0 10H16" />`)}</button>
        <input class="slider" type="range" aria-label="Zoom" min="0" max="200" value="100" />
        <button aria-label="Zoom in">${icon(16, 20, svg`<path stroke="#5f5f5f" stroke-width="4" d="M0 10H16M8 2V18" />`)}</button>
      </div>
      <span>100%</span>
    `;
  }
}

@customElement("alert-box")
export class AlertBox extends LitElement {
  static styles = [
    base,
    css`
      :host {
        position: absolute;
        top: 256px;
        left: calc(50% - 261px);
        width: 520px;
        padding: 52px 32px 32px;
        display: flex;
        flex-direction: column;
        align-items: center;
        border-radius: 20px;
        background: #eae9e7;
        box-shadow: 0 0 2px rgba(0, 0, 0, 0.6), inset 0 1px 0 #f6f6f5, 0 32px 72px rgba(0, 0, 0, 0.48);
        color: #363534;
        text-align: center;
      }
      .tile {
        display: grid;
        place-items: center;
        width: 103px;
        height: 103px;
        padding: 1px 8px 0 0;
        border-radius: 22px;
        background: #fff;
        box-shadow: 0 1px 3px rgba(0, 0, 0, 0.3);
      }
      .heading {
        margin: 53px 0 0;
        font-size: 26px;
        line-height: 32px;
        font-weight: 700;
      }
      .message {
        margin: 19px 0 0;
        font-size: 22px;
        line-height: 28px;
      }
      .ok {
        align-self: stretch;
        height: 56px;
        margin-top: 32px;
        padding-bottom: 2px;
        border-radius: 12px;
        background: linear-gradient(#319064, #077a45);
        color: #fff;
        font-size: 25px;
        font-weight: 500;
      }
    `,
  ];

  render() {
    return html`
      <div class="tile">${icons.excel}</div>
      <h1 class="heading">Alert</h1>
      <p class="message">This query didn't return any columns<br />Microsoft Excel can use.</p>
      <button class="ok">OK</button>
    `;
  }
}

@customElement("app-root")
export class AppRoot extends LitElement {
  static styles = css`
    :host {
      position: relative;
      display: flex;
      flex-direction: column;
      height: 100vh;
      overflow: hidden;
      box-sizing: border-box;
      border-right: 1px solid #6a6a6a;
      background: #f5f5f5;
      font-family: Inter, "Liberation Sans", sans-serif;
    }
  `;

  render() {
    return html`
      <title-bar></title-bar>
      <ribbon-tabs></ribbon-tabs>
      <data-ribbon></data-ribbon>
      <formula-bar></formula-bar>
      <sheet-grid></sheet-grid>
      <sheet-tabs></sheet-tabs>
      <status-bar></status-bar>
      <alert-box role="alertdialog" aria-label="Alert"></alert-box>
    `;
  }
}
